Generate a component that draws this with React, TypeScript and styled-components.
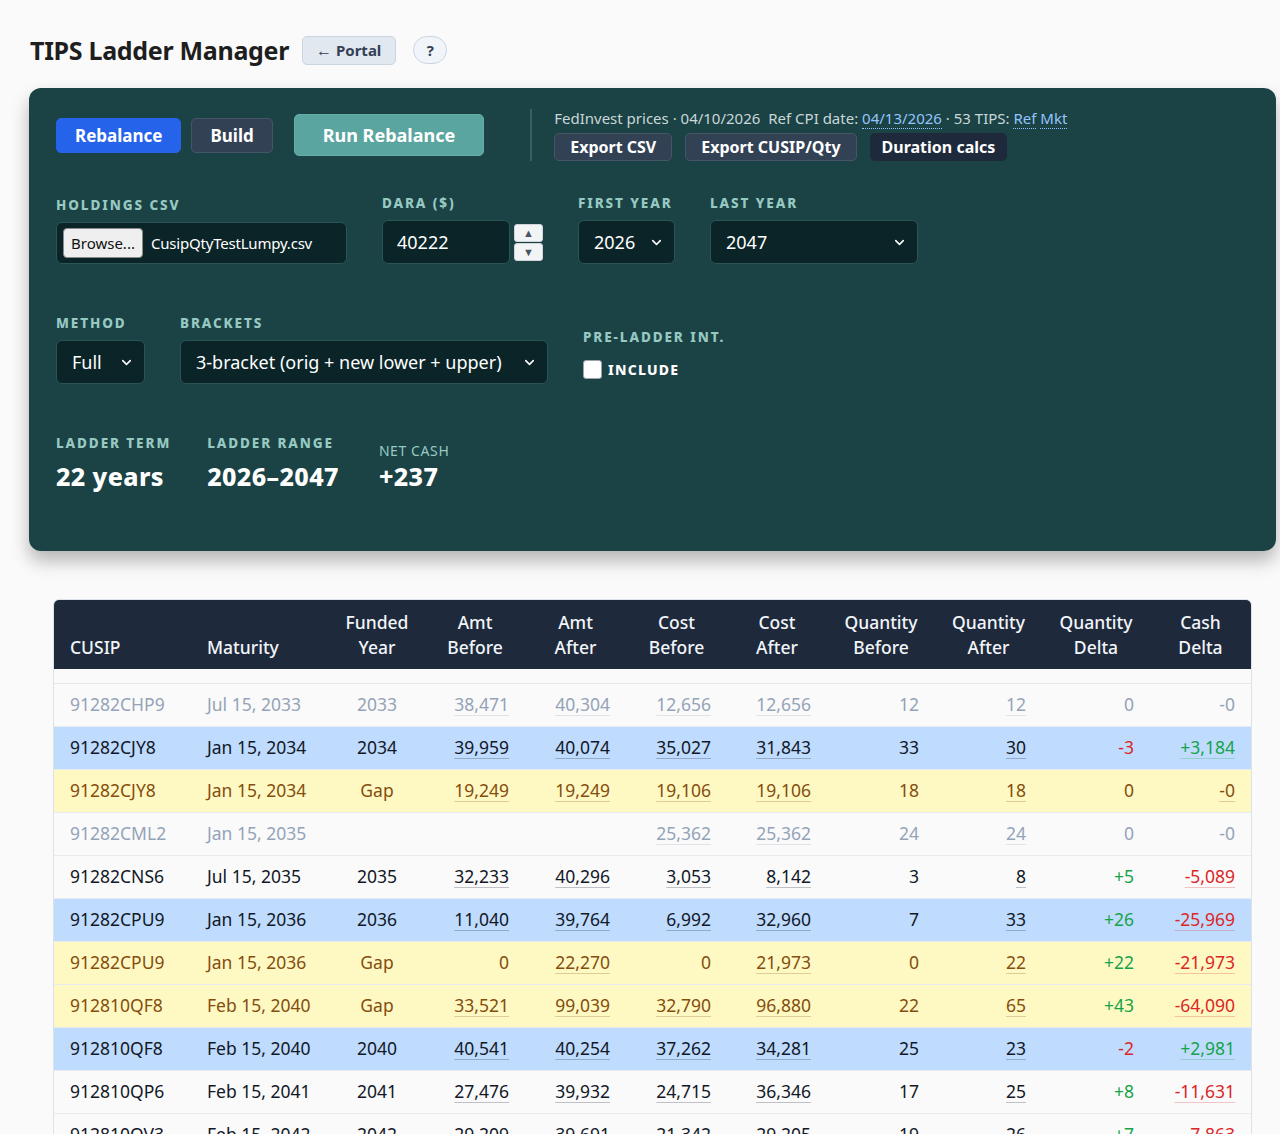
import React from 'react'
import styled, { createGlobalStyle, css } from 'styled-components'
import { ChevronDown } from 'lucide-react'

type RowKind = 'muted' | 'blue' | 'gap' | 'normal'

type Holding = {
    kind: RowKind
    cusip: string
    maturity: string
    funded: string
    amtBefore: string
    amtAfter: string
    costBefore: string
    costAfter: string
    qtyBefore: string
    qtyAfter: string
    qtyDelta: string
    cashDelta: string
}

const rows: Holding[] = [
    { kind: 'muted', cusip: '91282CHP9', maturity: 'Jul 15, 2033', funded: '2033', amtBefore: '38,471', amtAfter: '40,304', costBefore: '12,656', costAfter: '12,656', qtyBefore: '12', qtyAfter: '12', qtyDelta: '0', cashDelta: '-0' },
    { kind: 'blue', cusip: '91282CJY8', maturity: 'Jan 15, 2034', funded: '2034', amtBefore: '39,959', amtAfter: '40,074', costBefore: '35,027', costAfter: '31,843', qtyBefore: '33', qtyAfter: '30', qtyDelta: '-3', cashDelta: '+3,184' },
    { kind: 'gap', cusip: '91282CJY8', maturity: 'Jan 15, 2034', funded: 'Gap', amtBefore: '19,249', amtAfter: '19,249', costBefore: '19,106', costAfter: '19,106', qtyBefore: '18', qtyAfter: '18', qtyDelta: '0', cashDelta: '-0' },
    { kind: 'muted', cusip: '91282CML2', maturity: 'Jan 15, 2035', funded: '', amtBefore: '', amtAfter: '', costBefore: '25,362', costAfter: '25,362', qtyBefore: '24', qtyAfter: '24', qtyDelta: '0', cashDelta: '-0' },
    { kind: 'normal', cusip: '91282CNS6', maturity: 'Jul 15, 2035', funded: '2035', amtBefore: '32,233', amtAfter: '40,296', costBefore: '3,053', costAfter: '8,142', qtyBefore: '3', qtyAfter: '8', qtyDelta: '+5', cashDelta: '-5,089' },
    { kind: 'blue', cusip: '91282CPU9', maturity: 'Jan 15, 2036', funded: '2036', amtBefore: '11,040', amtAfter: '39,764', costBefore: '6,992', costAfter: '32,960', qtyBefore: '7', qtyAfter: '33', qtyDelta: '+26', cashDelta: '-25,969' },
    { kind: 'gap', cusip: '91282CPU9', maturity: 'Jan 15, 2036', funded: 'Gap', amtBefore: '0', amtAfter: '22,270', costBefore: '0', costAfter: '21,973', qtyBefore: '0', qtyAfter: '22', qtyDelta: '+22', cashDelta: '-21,973' },
    { kind: 'gap', cusip: '912810QF8', maturity: 'Feb 15, 2040', funded: 'Gap', amtBefore: '33,521', amtAfter: '99,039', costBefore: '32,790', costAfter: '96,880', qtyBefore: '22', qtyAfter: '65', qtyDelta: '+43', cashDelta: '-64,090' },
    { kind: 'blue', cusip: '912810QF8', maturity: 'Feb 15, 2040', funded: '2040', amtBefore: '40,541', amtAfter: '40,254', costBefore: '37,262', costAfter: '34,281', qtyBefore: '25', qtyAfter: '23', qtyDelta: '-2', cashDelta: '+2,981' },
    { kind: 'normal', cusip: '912810QP6', maturity: 'Feb 15, 2041', funded: '2041', amtBefore: '27,476', amtAfter: '39,932', costBefore: '24,715', costAfter: '36,346', qtyBefore: '17', qtyAfter: '25', qtyDelta: '+8', cashDelta: '-11,631' },
    { kind: 'normal', cusip: '912810QV3', maturity: 'Feb 15, 2042', funded: '2042', amtBefore: '29,209', amtAfter: '39,691', costBefore: '21,342', costAfter: '29,205', qtyBefore: '19', qtyAfter: '26', qtyDelta: '+7', cashDelta: '-7,863' },
]

const columns = [
    { title: ['', 'CUSIP'], width: 137, align: 'left' },
    { title: ['', 'Maturity'], width: 138, align: 'left' },
    { title: ['Funded', 'Year'], width: 96, align: 'center' },
    { title: ['Amt', 'Before'], width: 100, align: 'right' },
    { title: ['Amt', 'After'], width: 101, align: 'right' },
    { title: ['Cost', 'Before'], width: 101, align: 'right' },
    { title: ['Cost', 'After'], width: 100, align: 'right' },
    { title: ['Quantity', 'Before'], width: 108, align: 'right' },
    { title: ['Quantity', 'After'], width: 107, align: 'right' },
    { title: ['Quantity', 'Delta'], width: 108, align: 'right' },
    { title: ['Cash', 'Delta'], width: 101, align: 'right' },
] as const

function tone(value: string): 'up' | 'down' | undefined {
    if (value.startsWith('+')) return 'up'
    if (value.startsWith('-') && value !== '-0') return 'down'
    return undefined
}

function Num({ value, dotted }: { value: string; dotted: boolean }) {
    if (!value) return null
    const line = dotted && value !== '0'
    return <NumText $underline={line}>{value}</NumText>
}

function HoldingRow({ row }: { row: Holding }) {
    return (
        <Row $kind={row.kind}>
            <Cell $align="left">{row.cusip}</Cell>
            <Cell $align="left">{row.maturity}</Cell>
            <Cell $align="center">{row.funded}</Cell>
            <Cell $align="right"><Num value={row.amtBefore} dotted /></Cell>
            <Cell $align="right"><Num value={row.amtAfter} dotted /></Cell>
            <Cell $align="right"><Num value={row.costBefore} dotted /></Cell>
            <Cell $align="right"><Num value={row.costAfter} dotted /></Cell>
            <Cell $align="right"><Num value={row.qtyBefore} dotted={false} /></Cell>
            <Cell $align="right"><Num value={row.qtyAfter} dotted /></Cell>
            <Cell $align="right" $tone={tone(row.qtyDelta)}>{row.qtyDelta}</Cell>
            <Cell $align="right" $tone={tone(row.cashDelta)}>
                <Num value={row.cashDelta} dotted={row.kind !== 'muted'} />
            </Cell>
        </Row>
    )
}

function Select({ value, width }: { value: string; width: number }) {
    return (
        <SelectBox style={{ width }}>
            <span>{value}</span>
            <ChevronDown size={15} strokeWidth={2.5} />
        </SelectBox>
    )
}

export default function App(): JSX.Element {
    return (
        <Page>
            <GlobalStyle />
            <Header>
                <Title>TIPS Ladder Manager</Title>
                <PortalButton>
                    <Arrow>←</Arrow> Portal
                </PortalButton>
                <HelpButton>?</HelpButton>
            </Header>

            <Panel>
                <TopRow>
                    <ModeButton $active>Rebalance</ModeButton>
                    <ModeButton>Build</ModeButton>
                    <RunButton>Run Rebalance</RunButton>
                    <Divider />
                    <InfoBlock>
                        <InfoLine>
                            FedInvest prices · 04/10/2026 <Gap />Ref CPI date:{' '}
                            <InfoLink>04/13/2026</InfoLink> · 53 TIPS: <InfoLink>Ref</InfoLink>{' '}
                            <InfoLink>Mkt</InfoLink>
                        </InfoLine>
                        <ExportRow>
                            <ExportButton>Export CSV</ExportButton>
                            <ExportButton>Export CUSIP/Qty</ExportButton>
                            <ExportButton $dark>Duration calcs</ExportButton>
                        </ExportRow>
                    </InfoBlock>
                </TopRow>

                <FieldRow>
                    <Field>
                        <Label>Holdings CSV</Label>
                        <FileBox>
                            <BrowseButton>Browse...</BrowseButton>
                            <FileName>CusipQtyTestLumpy.csv</FileName>
                        </FileBox>
                    </Field>
                    <Field>
                        <Label>DARA ($)</Label>
                        <NumberWrap>
                            <TextBox>40222</TextBox>
                            <Spinner>
                                <SpinButton>▲</SpinButton>
                                <SpinButton>▼</SpinButton>
                            </Spinner>
                        </NumberWrap>
                    </Field>
                    <Field>
                        <Label>First Year</Label>
                        <Select value="2026" width={97} />
                    </Field>
                    <Field>
                        <Label>Last Year</Label>
                        <Select value="2047" width={208} />
                    </Field>
                </FieldRow>

                <FieldRow $center>
                    <Field>
                        <Label>Method</Label>
                        <Select value="Full" width={89} />
                    </Field>
                    <Field>
                        <Label>Brackets</Label>
                        <Select value="3-bracket (orig + new lower + upper)" width={368} />
                    </Field>
                    <Field $shift>
                        <Label>Pre-ladder int.</Label>
                        <CheckRow>
                            <CheckBox />
                            <CheckLabel>Include</CheckLabel>
                        </CheckRow>
                    </Field>
                </FieldRow>

                <StatRow>
                    <Stat>
                        <Label>Ladder term</Label>
                        <StatValue>22 years</StatValue>
                    </Stat>
                    <Stat>
                        <Label>Ladder range</Label>
                        <StatValue>2026–2047</StatValue>
                    </Stat>
                    <Stat $soft>
                        <SoftLabel>NET CASH</SoftLabel>
                        <StatValue>+237</StatValue>
                    </Stat>
                </StatRow>
            </Panel>

            <TableWrap>
                <Table>
                    <colgroup>
                        {columns.map((c, i) => (
                            <col key={i} style={{ width: c.width }} />
                        ))}
                    </colgroup>
                    <thead>
                        <tr>
                            {columns.map((c, i) => (
                                <HeadCell key={i} $align={c.align}>
                                    {c.title[0] && <div>{c.title[0]}</div>}
                                    <div>{c.title[1]}</div>
                                </HeadCell>
                            ))}
                        </tr>
                    </thead>
                    <tbody>
                        <SpacerRow>
                            <td colSpan={columns.length} />
                        </SpacerRow>
                        {rows.map((r, i) => (
                            <HoldingRow key={i} row={r} />
                        ))}
                    </tbody>
                </Table>
            </TableWrap>
        </Page>
    )
}

const GlobalStyle = createGlobalStyle`
    html, body {
        margin: 0;
        background: #fafafa;
        font-family: "Segoe UI", "Noto Sans", "Open Sans", sans-serif;
        color: #1f2937;
        overflow: hidden;
    }
`

const Page = styled.div`
    padding: 33px 4px 0 29px;
    height: 1101px;
    overflow: hidden;
`

const Header = styled.div`
    display: flex;
    align-items: center;
    height: 34px;
    padding-left: 1px;
`

const Title = styled.h1`
    margin: 0 13px 0 0;
    font-size: 25px;
    font-weight: 700;
    color: #1e1e1e;
    letter-spacing: -0.3px;
`

const PortalButton = styled.button`
    height: 29px;
    padding: 0 14px 0 13px;
    background: #e2e8f0;
    border: 1px solid #cbd5e1;
    border-radius: 5px;
    font: 700 15px "Segoe UI", "Noto Sans", sans-serif;
    color: #334155;
    margin-right: 17px;
`

const Arrow = styled.span`
    font-size: 16px;
    font-weight: 400;
`

const HelpButton = styled.button`
    width: 34px;
    height: 28px;
    border-radius: 14px;
    background: #f1f5f9;
    border: 1px solid #cbd5e1;
    font: 700 15px "Segoe UI", "Noto Sans", sans-serif;
    color: #334155;
    padding: 0;
`

const Panel = styled.section`
    margin-top: 21px;
    background: #1b4244;
    border-radius: 12px;
    padding: 21px 27px 60px;
    box-shadow: 0 10px 18px rgba(0, 0, 0, 0.28);
    color: #e5eeee;
`

const TopRow = styled.div`
    display: flex;
    align-items: center;
`

const ModeButton = styled.button<{ $active?: boolean }>`
    height: 35px;
    padding: 0 18px;
    margin-right: 10px;
    border-radius: 5px;
    font: 700 17px "Segoe UI", "Noto Sans", sans-serif;
    color: #ffffff;
    ${(p) =>
        p.$active
            ? css`
                  background: #2563eb;
                  border: 1px solid #2563eb;
              `
            : css`
                  background: #334155;
                  border: 1px solid #475569;
              `}
`

const RunButton = styled.button`
    height: 42px;
    margin-left: 11px;
    padding: 0 28px;
    background: #5ba5a0;
    border: 1px solid #66ada8;
    border-radius: 5px;
    font: 700 18px "Segoe UI", "Noto Sans", sans-serif;
    color: #ffffff;
`

const Divider = styled.div`
    width: 2px;
    height: 52px;
    background: #3a5f62;
    margin: 0 22px 0 46px;
`

const InfoBlock = styled.div`
    display: flex;
    flex-direction: column;
    gap: 5px;
`

const InfoLine = styled.div`
    font-size: 15px;
    line-height: 19px;
    color: #c9d7d8;
    white-space: nowrap;
`

const Gap = styled.span`
    display: inline-block;
    width: 4px;
`

const InfoLink = styled.span`
    color: #93c5fd;
    border-bottom: 1px dotted #93c5fd;
`

const ExportRow = styled.div`
    display: flex;
    gap: 13px;
`

const ExportButton = styled.button<{ $dark?: boolean }>`
    height: 28px;
    padding: 0 ${(p) => (p.$dark ? '11px' : '15px')};
    border-radius: 5px;
    font: 700 16px "Segoe UI", "Noto Sans", sans-serif;
    color: #ffffff;
    background: ${(p) => (p.$dark ? '#1e293b' : '#334155')};
    border: 1px solid ${(p) => (p.$dark ? '#1e293b' : '#475569')};
`

const FieldRow = styled.div<{ $center?: boolean }>`
    display: flex;
    gap: 35px;
    align-items: ${(p) => (p.$center ? 'center' : 'flex-end')};
    margin-top: ${(p) => (p.$center ? '50px' : '33px')};
`

const Field = styled.div<{ $shift?: boolean }>`
    display: flex;
    flex-direction: column;
    gap: 8px;
    padding-top: ${(p) => (p.$shift ? '8px' : '0')};
`

const Label = styled.div`
    font-size: 13.5px;
    font-weight: 800;
    letter-spacing: 1.9px;
    text-transform: uppercase;
    color: #97c9c3;
    white-space: nowrap;
`

const SoftLabel = styled.div`
    font-size: 14px;
    letter-spacing: 0.6px;
    color: #97c9c3;
`

const inputBox = css`
    height: 44px;
    box-sizing: border-box;
    background: #0a2427;
    border: 1px solid #2b5457;
    border-radius: 6px;
    color: #ffffff;
    font-size: 18px;
    display: flex;
    align-items: center;
`

const FileBox = styled.div`
    ${inputBox};
    height: 42px;
    width: 291px;
    padding: 0 6px;
    gap: 8px;
`

const BrowseButton = styled.div`
    height: 28px;
    padding: 0 7px;
    display: flex;
    align-items: center;
    background: #efefef;
    border: 1px solid #8a8a8a;
    border-radius: 4px;
    color: #111111;
    font-size: 15px;
`

const FileName = styled.span`
    font-size: 15px;
    letter-spacing: -0.2px;
`

const NumberWrap = styled.div`
    display: flex;
    align-items: center;
    gap: 4px;
`

const TextBox = styled.div`
    ${inputBox};
    width: 128px;
    padding: 0 14px;
`

const Spinner = styled.div`
    display: flex;
    flex-direction: column;
    gap: 1px;
`

const SpinButton = styled.div`
    width: 29px;
    height: 18px;
    background: #f3f4f6;
    border: 1px solid #d1d5db;
    border-radius: 3px;
    box-sizing: border-box;
    display: flex;
    align-items: center;
    justify-content: center;
    font-size: 11px;
    color: #4b5563;
`

const SelectBox = styled.div`
    ${inputBox};
    padding: 0 10px 0 15px;
    justify-content: space-between;
    white-space: nowrap;
`

const CheckRow = styled.div`
    display: flex;
    align-items: center;
    gap: 6px;
    margin-top: 6px;
`

const CheckBox = styled.div`
    width: 19px;
    height: 19px;
    box-sizing: border-box;
    background: #ffffff;
    border: 1px solid #9ca3af;
    border-radius: 3px;
`

const CheckLabel = styled.span`
    font-size: 14px;
    font-weight: 800;
    letter-spacing: 1.2px;
    text-transform: uppercase;
    color: #ffffff;
`

const StatRow = styled.div`
    display: flex;
    gap: 36px;
    margin-top: 50px;
`

const Stat = styled.div<{ $soft?: boolean }>`
    display: flex;
    flex-direction: column;
    gap: ${(p) => (p.$soft ? '1px' : '9px')};
    padding-top: ${(p) => (p.$soft ? '7px' : '0')};
    margin-left: ${(p) => (p.$soft ? '4px' : '0')};
`

const StatValue = styled.div`
    font-size: 25px;
    font-weight: 800;
    color: #ffffff;
    line-height: 30px;
    letter-spacing: 0.4px;
`

const TableWrap = styled.div`
    margin: 48px 24px 0;
    border: 1px solid #dbe2ea;
    border-radius: 6px 6px 0 0;
    overflow: hidden;
    background: #fafafa;
`

const Table = styled.table`
    width: 100%;
    table-layout: fixed;
    border-collapse: collapse;
    font-size: 17.5px;
`

const HeadCell = styled.th<{ $align: string }>`
    background: #1e293b;
    color: #f1f5f9;
    font-size: 17.5px;
    font-weight: 500;
    line-height: 25px;
    text-align: ${(p) => (p.$align === 'left' ? 'left' : 'center')};
    vertical-align: bottom;
    padding: 10px 16px 9px;
    white-space: nowrap;
`

const SpacerRow = styled.tr`
    height: 14px;
    border-bottom: 1px solid #e5e7eb;
`

const rowColors: Record<RowKind, { bg: string; fg: string }> = {
    muted: { bg: '#fafafa', fg: '#94a3b8' },
    blue: { bg: '#bfdbfe', fg: '#111827' },
    gap: { bg: '#fef9c3', fg: '#854d0e' },
    normal: { bg: '#fafafa', fg: '#111827' },
}

const Row = styled.tr<{ $kind: RowKind }>`
    background: ${(p) => rowColors[p.$kind].bg};
    color: ${(p) => rowColors[p.$kind].fg};
    border-bottom: 1px solid #e8ebef;
`

const Cell = styled.td<{ $align: string; $tone?: 'up' | 'down' }>`
    height: 42px;
    padding: 0 16px;
    text-align: ${(p) => p.$align};
    white-space: nowrap;
    line-height: 23px;
    ${(p) => p.$tone === 'up' && 'color: #16a34a;'}
    ${(p) => p.$tone === 'down' && 'color: #dc2626;'}
`

const NumText = styled.span<{ $underline: boolean }>`
    ${(p) =>
        p.$underline &&
        css`
            text-decoration: underline;
            text-decoration-color: color-mix(in srgb, currentColor 25%, transparent);
            text-underline-offset: 4px;
        `}
`
